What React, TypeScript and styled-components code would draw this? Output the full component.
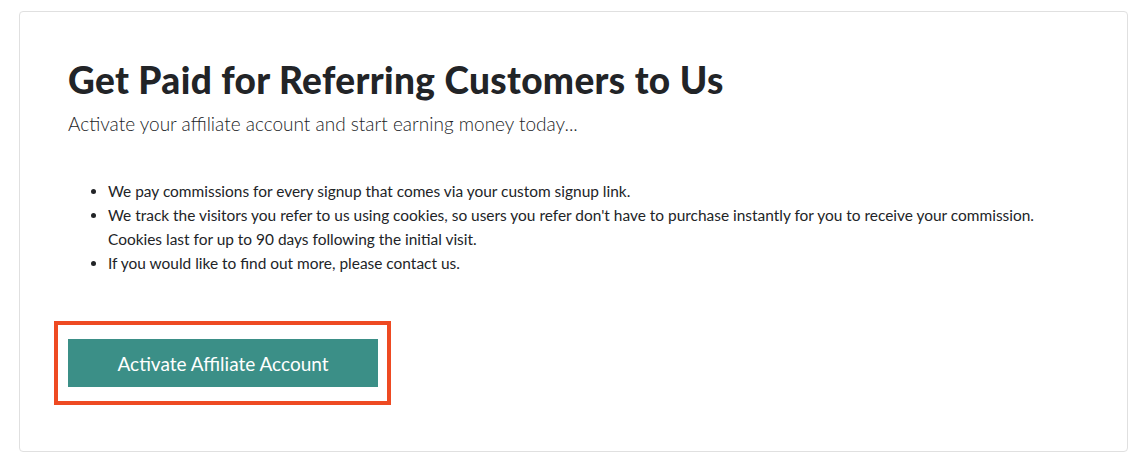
import React from "react";
import styled, { createGlobalStyle } from "styled-components";

const Global = createGlobalStyle`
  html, body { margin: 0; padding: 0; background: #ffffff; }
  body { font-family: "Lato", "Open Sans", sans-serif; color: #222427; }
`;

const Page = styled.div`
  padding: 11px 18px 14px 19px;
`;

const Card = styled.section`
  box-sizing: border-box;
  height: 441px;
  border: 1px solid #e0e0e0;
  border-radius: 4px;
  padding: 44px 48px 0 48px;
  display: flex;
  flex-direction: column;
`;

const Title = styled.h1`
  margin: 0;
  font-family: "Lato", sans-serif;
  font-weight: 900;
  font-size: 37px;
  line-height: 48px;
  letter-spacing: 0.35px;
  color: #222427;
`;

const Subtitle = styled.p`
  margin: 6px 0 0 0;
  font-weight: 300;
  font-size: 19px;
  line-height: 28px;
  color: #222427;
`;

const List = styled.ul`
  margin: 41px 0 0 0;
  padding-left: 40px;
  font-size: 15.45px;
  line-height: 24px;
  color: #222427;
`;

const Item = styled.li``;

const Highlight = styled.div`
  align-self: flex-start;
  margin: 46px 0 0 -14px;
  border: 4px solid #ee4a22;
  padding: 14px 9px 14px 10px;
`;

const Button = styled.button`
  display: block;
  width: 310px;
  height: 48px;
  border: none;
  background: #3b8f87;
  color: #ffffff;
  font-family: "Lato", sans-serif;
  font-size: 19px;
  cursor: pointer;
`;

export default function App() {
  return (
    <>
      <Global />
      <Page>
        <Card>
          <Title>Get Paid for Referring Customers to Us</Title>
          <Subtitle>Activate your affiliate account and start earning money today...</Subtitle>
          <List>
            <Item>We pay commissions for every signup that comes via your custom signup link.</Item>
            <Item>
              We track the visitors you refer to us using cookies, so users you refer don't have to purchase instantly for you to receive your commission.
              <br />
              Cookies last for up to 90 days following the initial visit.
            </Item>
            <Item>If you would like to find out more, please contact us.</Item>
          </List>
          <Highlight>
            <Button>Activate Affiliate Account</Button>
          </Highlight>
        </Card>
      </Page>
    </>
  );
}
